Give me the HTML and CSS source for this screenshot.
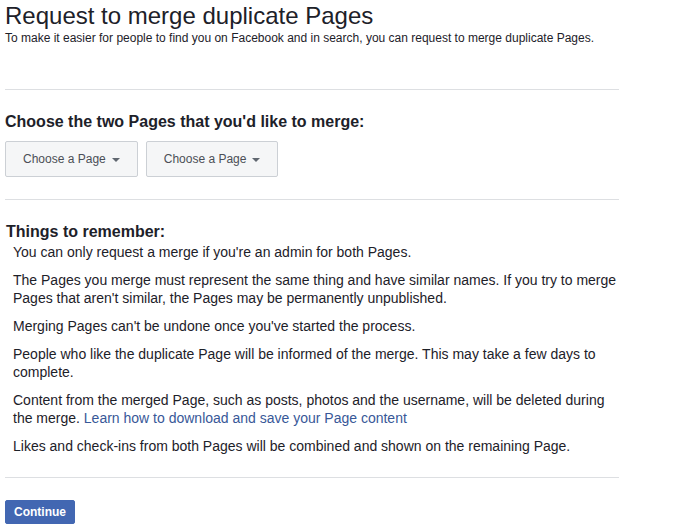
FILE: index.html
```html
<!DOCTYPE html>
<html lang="en">
<head>
<meta charset="utf-8">
<title>Request to merge duplicate Pages</title>
<link rel="stylesheet" href="styles.css">
</head>
<body>
<div class="page">
  <header class="intro">
    <h1 class="title">Request to merge duplicate Pages</h1>
    <p class="subtitle">To make it easier for people to find you on Facebook and in search, you can request to merge duplicate Pages.</p>
  </header>
  <hr class="divider">
  <section class="choose">
    <h2 class="heading">Choose the two Pages that you'd like to merge:</h2>
    <div class="pickers">
      <button class="picker" type="button"><span>Choose a Page</span><i class="caret"></i></button>
      <button class="picker" type="button"><span>Choose a Page</span><i class="caret"></i></button>
    </div>
  </section>
  <hr class="divider">
  <section class="remember">
    <h2 class="heading heading-tight">Things to remember:</h2>
    <ul class="notes">
      <li>You can only request a merge if you're an admin for both Pages.</li>
      <li>The Pages you merge must represent the same thing and have similar names. If you try to merge Pages that aren't similar, the Pages may be permanently unpublished.</li>
      <li>Merging Pages can't be undone once you've started the process.</li>
      <li>People who like the duplicate Page will be informed of the merge. This may take a few days to complete.</li>
      <li>Content from the merged Page, such as posts, photos and the username, will be deleted during the merge. <a class="link" href="#">Learn how to download and save your Page content</a></li>
      <li>Likes and check-ins from both Pages will be combined and shown on the remaining Page.</li>
    </ul>
  </section>
  <hr class="divider">
  <div class="actions">
    <button class="continue" type="button">Continue</button>
  </div>
</div>
</body>
</html>
```

FILE: styles.css
```css
html, body {
  margin: 0;
  padding: 0;
  background: #ffffff;
}

body {
  font-family: "Liberation Sans", Arial, Helvetica, sans-serif;
  color: #1d2129;
}

.page {
  width: 614px;
  margin-left: 5px;
}

.intro {
  padding-top: 2px;
}

.title {
  margin: 0;
  font-size: 24px;
  line-height: 28px;
  font-weight: normal;
  color: #1d2129;
}

.subtitle {
  margin: 0;
  font-size: 12px;
  line-height: 16px;
}

.divider {
  border: 0;
  border-top: 1px solid #dddfe2;
  margin: 0;
  height: 0;
}

.intro + .divider {
  margin-top: 43px;
}

.choose {
  padding: 22px 0 22px 0;
}

.heading {
  margin: 0;
  font-size: 16px;
  line-height: 20px;
  font-weight: bold;
  color: #1d2129;
}

.pickers {
  display: flex;
  gap: 8px;
  margin-top: 9px;
}

.picker {
  display: flex;
  align-items: center;
  gap: 6px;
  height: 36px;
  padding: 0 17px;
  background: #f5f6f7;
  border: 1px solid #ccd0d5;
  border-radius: 2px;
  font-family: "Liberation Sans", Arial, Helvetica, sans-serif;
  font-size: 12px;
  color: #4b4f56;
  cursor: pointer;
}

.caret {
  display: block;
  width: 0;
  height: 0;
  border-left: 4px solid transparent;
  border-right: 4px solid transparent;
  border-top: 4px solid #606770;
  margin-top: 1px;
}

.remember {
  padding: 22px 0 22px 0;
}

.heading-tight {
  margin-left: 1px;
}

.notes {
  list-style: none;
  margin: 1px 0 0 0;
  padding: 0 0 0 8px;
  font-size: 14px;
  line-height: 18px;
}

.notes li + li {
  margin-top: 10px;
}

.link {
  color: #385898;
  text-decoration: none;
}

.actions {
  padding-top: 22px;
}

.continue {
  height: 24px;
  padding: 0 8px;
  background: #4267b2;
  border: 1px solid #4267b2;
  border-radius: 2px;
  color: #ffffff;
  font-family: "Liberation Sans", Arial, Helvetica, sans-serif;
  font-size: 12px;
  font-weight: bold;
  cursor: pointer;
}
```
